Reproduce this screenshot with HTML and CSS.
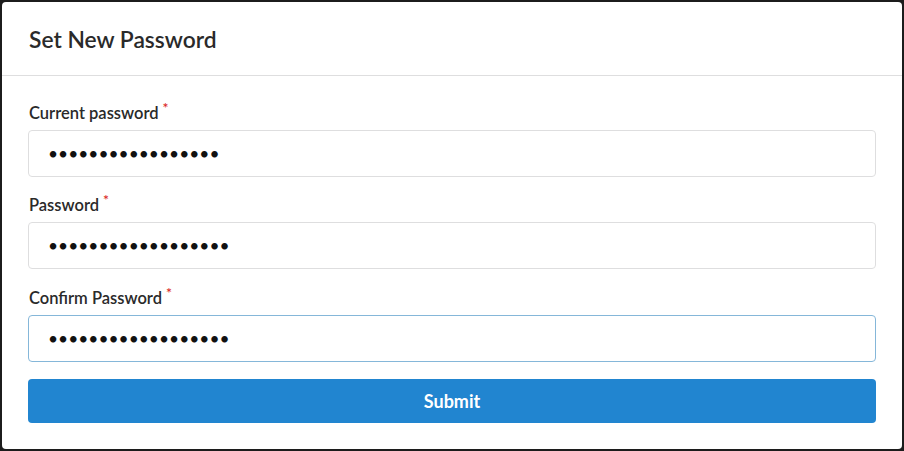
FILE: index.html
```html
<!DOCTYPE html>
<html lang="en">

<head>
    <meta charset="utf-8">
    <meta name="viewport" content="width=device-width, initial-scale=1.0">
    <title>Set New Password</title>
    <link rel="stylesheet" href="styles.css">
</head>

<body>
    <section class="modal">
        <h2 class="modal_header">Set New Password</h2>

        <form class="modal_content">
            <div class="field">
                <label class="required" for="current">Current password</label>
                <input type="password" id="current" value="abcdefghijklmnopq">
            </div>

            <div class="field">
                <label class="required" for="nyt">Password</label>
                <input type="password" id="nyt" value="abcdefghijklmnopqr">
            </div>

            <div class="field">
                <label class="required" for="confirm">Confirm Password</label>
                <input class="focus" type="password" id="confirm" value="abcdefghijklmnopqr" autofocus>
            </div>

            <button type="button" class="submit">Submit</button>
        </form>
    </section>
</body>

</html>
```

FILE: styles.css
```css
* {
    box-sizing: border-box;
    font-family: Lato, "Noto Sans", sans-serif;
    margin: 0;
}

body {
    background-color: #1c1c1c;
    padding: 2px;
}

.modal {
    width: 900px;
    height: 447px;
    background-color: white;
    border-radius: 4px;
    overflow: hidden;
}

.modal_header {
    padding: 22px 26px 20px 27px;
    font-size: 22.8px;
    line-height: 31px;
    font-weight: 600;
    color: #2a2a2a;
    border-bottom: 1px solid #dededf;
}

.modal_content {
    padding: 28px 26px 26px;
}

.field {
    margin-bottom: 19px;
}

.field:nth-child(2) {
    margin-bottom: 20px;
}

.field:nth-child(3) {
    margin-bottom: 17px;
}

label {
    display: block;
    font-size: 16.5px;
    line-height: 18px;
    font-weight: 600;
    color: #2a2a2a;
    margin-bottom: 7px;
    padding-left: 1px;
}

.required::after {
    content: "*";
    color: #db2828;
    font-size: 14px;
    margin-left: 4px;
    position: relative;
    top: -6px;
}

input {
    display: block;
    width: 100%;
    height: 47px;
    padding: 0 19px;
    font-size: 17.4px;
    color: #111;
    border: 1px solid #dededf;
    border-radius: 4px;
    outline: none;
}

.focus {
    border-color: #85b7d9;
}

.submit {
    display: flex;
    align-items: center;
    justify-content: center;
    width: 100%;
    height: 44px;
    background-color: #2185d0;
    color: white;
    border: none;
    border-radius: 4px;
    font-size: 18px;
    font-weight: 700;
}
```
